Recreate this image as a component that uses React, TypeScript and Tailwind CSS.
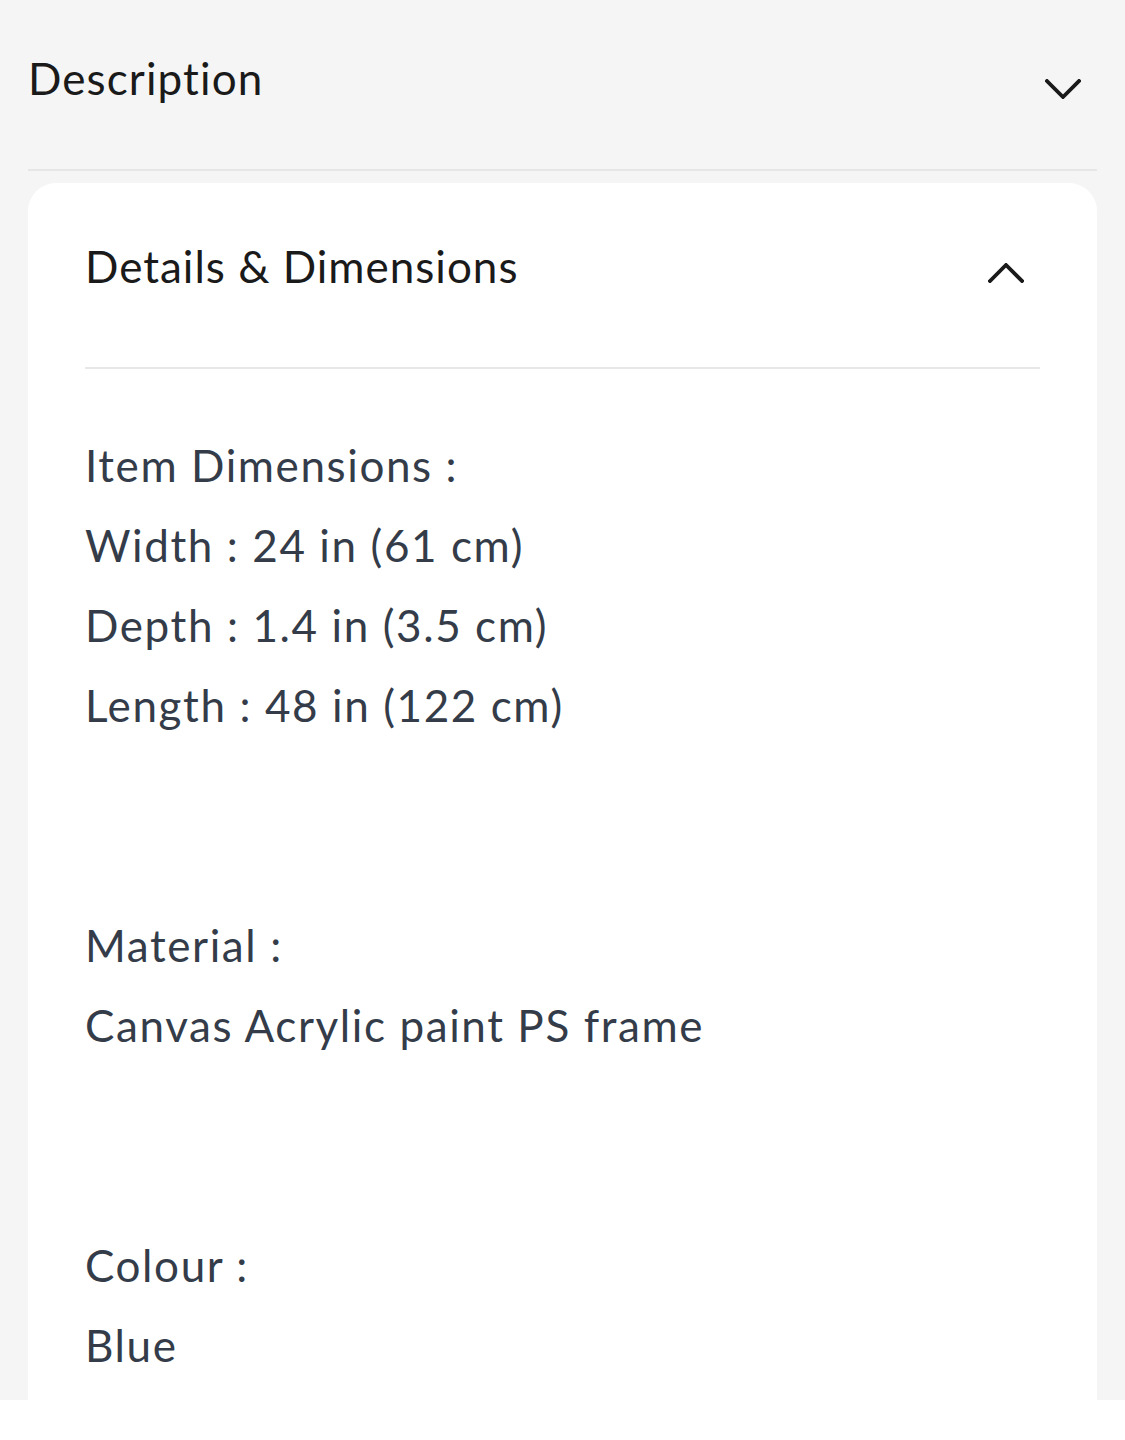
import React from "react";

const Chevron = ({ up }: { up?: boolean }) => (
  <svg width="36" height="20" viewBox="0 0 36 20" fill="none" className="shrink-0">
    <polyline
      points={up ? "2,18 18,2 34,18" : "2,2 18,18 34,2"}
      stroke="#1a1a1a"
      strokeWidth="3.8"
      strokeLinecap="square"
      strokeLinejoin="miter"
    />
  </svg>
);

const lines: string[] = [
  "Item Dimensions :",
  "Width : 24 in (61 cm)",
  "Depth : 1.4 in (3.5 cm)",
  "Length : 48 in (122 cm)",
  "",
  "",
  "Material :",
  "Canvas Acrylic paint PS frame",
  "",
  "",
  "Colour :",
  "Blue",
];

export default function App() {
  return (
    <div
      className="h-[1400px] overflow-hidden bg-[#f5f5f5] px-[28px] [font-variant-ligatures:none]"
      style={{ fontFamily: "Lato, 'Noto Sans', sans-serif" }}
    >
      {/* Description (collapsed) */}
      <div className="flex h-[171px] items-start justify-between border-b-[2px] border-[#e6e6e6] pt-[50px]">
        <span className="text-[44px] leading-[56px] tracking-[1.1px] text-[#1a1a1a]">Description</span>
        <div className="mr-[16px] mt-[29px]">
          <Chevron />
        </div>
      </div>

      {/* Details & Dimensions (open) */}
      <div className="mt-[12px] rounded-[28px] bg-white px-[57px]">
        <div className="flex h-[186px] items-start justify-between border-b-[2px] border-[#e8e8e8] pt-[55px]">
          <span className="text-[44px] leading-[56px] tracking-[1px] text-[#1a1a1a]">Details &amp; Dimensions</span>
          <div className="mr-[16px] mt-[25px]">
            <Chevron up />
          </div>
        </div>

        <div className="pt-[56px] pb-[80px] text-[44px] leading-[80px] tracking-[1.6px] text-[#343c49]">
          {lines.map((l, i) => (
            <p key={i} className="h-[80px]">
              {l}
            </p>
          ))}
        </div>
      </div>
    </div>
  );
}
